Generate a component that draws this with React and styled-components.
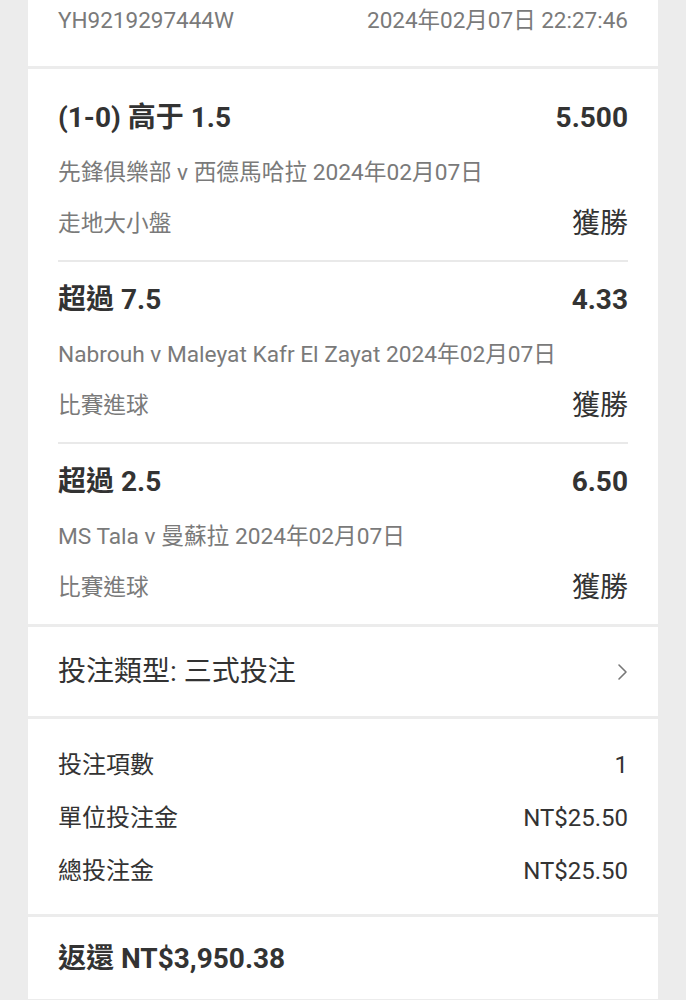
import styled, { createGlobalStyle } from "styled-components";

const GlobalStyle = createGlobalStyle`
  html, body {
    margin: 0;
    padding: 0;
    background: #ececec;
  }
  body {
    font-family: Roboto, "Noto Sans CJK TC", "Noto Sans", sans-serif;
    color: #333;
  }
`;

const Page = styled.div`
  width: 630px;
  margin: 0 28px;
  display: flex;
  flex-direction: column;
  gap: 3px;
  padding-bottom: 2px;
`;

const Section = styled.section`
  background: #fff;
  padding: ${(p) => p.$pad || "0 30px"};
`;

const Row = styled.div`
  display: flex;
  justify-content: space-between;
  align-items: center;
  margin-top: ${(p) => p.$mt || 0}px;
  line-height: ${(p) => p.$lh || 30}px;
`;

const Meta = styled.span`
  font-size: 22.5px;
  color: #7a7a7a;
`;

const Leg = styled.div`
  padding: 21px 0 19px;
  border-bottom: 2px solid #e9e9e9;
  &:last-child {
    border-bottom: none;
  }
`;

const Title = styled.span`
  font-size: 28px;
  font-weight: 700;
  color: #333;
`;

const Odds = styled.span`
  font-size: 28px;
  font-weight: 700;
  color: #333;
`;

const Sub = styled.span`
  font-size: 22.7px;
  color: #7a7a7a;
`;

const Result = styled.span`
  font-size: 28px;
  color: #333;
`;

const BetType = styled.span`
  font-size: 28px;
  color: #333;
`;

const Label = styled.span`
  font-size: 24px;
  color: #333;
`;

const Value = styled.span`
  font-size: 24px;
  color: #333;
`;

const Total = styled.span`
  font-size: 28px;
  font-weight: 700;
  color: #333;
`;

const Chevron = () => (
  <svg width="12" height="18" viewBox="0 0 12 18" fill="none">
    <polyline
      points="3,2 10,9 3,16"
      stroke="#777"
      strokeWidth="1.6"
      strokeLinecap="round"
      strokeLinejoin="round"
    />
  </svg>
);

const legs = [
  {
    title: "(1-0) 高于 1.5",
    odds: "5.500",
    match: "先鋒俱樂部 v 西德馬哈拉 2024年02月07日",
    market: "走地大小盤",
  },
  {
    title: "超過 7.5",
    odds: "4.33",
    match: "Nabrouh v Maleyat Kafr El Zayat 2024年02月07日",
    market: "比賽進球",
  },
  {
    title: "超過 2.5",
    odds: "6.50",
    match: "MS Tala v 曼蘇拉 2024年02月07日",
    market: "比賽進球",
  },
];

const summary = [
  ["投注項數", "1"],
  ["單位投注金", "NT$25.50"],
  ["總投注金", "NT$25.50"],
];

export default function App() {
  return (
    <>
      <GlobalStyle />
      <Page>
        <Section $pad="6px 30px 32px">
          <Row $lh={28}>
            <Meta>YH9219297444W</Meta>
            <Meta>2024年02月07日 22:27:46</Meta>
          </Row>
        </Section>

        <Section $pad="11px 30px 0">
          {legs.map((leg) => (
            <Leg key={leg.title}>
              <Row $lh={34}>
                <Title>{leg.title}</Title>
                <Odds>{leg.odds}</Odds>
              </Row>
              <Row $lh={28} $mt={24}>
                <Sub>{leg.match}</Sub>
              </Row>
              <Row $lh={34} $mt={20}>
                <Sub>{leg.market}</Sub>
                <Result>獲勝</Result>
              </Row>
            </Leg>
          ))}
        </Section>

        <Section $pad="28px 30px">
          <Row $lh={33}>
            <BetType>投注類型: 三式投注</BetType>
            <Chevron />
          </Row>
        </Section>

        <Section $pad="20px 30px 16px">
          {summary.map(([k, v]) => (
            <Row key={k} $lh={53}>
              <Label>{k}</Label>
              <Value>{v}</Value>
            </Row>
          ))}
        </Section>

        <Section $pad="28px 30px 26px">
          <Row $lh={28}>
            <Total>返還 NT$3,950.38</Total>
          </Row>
        </Section>
      </Page>
    </>
  );
}
